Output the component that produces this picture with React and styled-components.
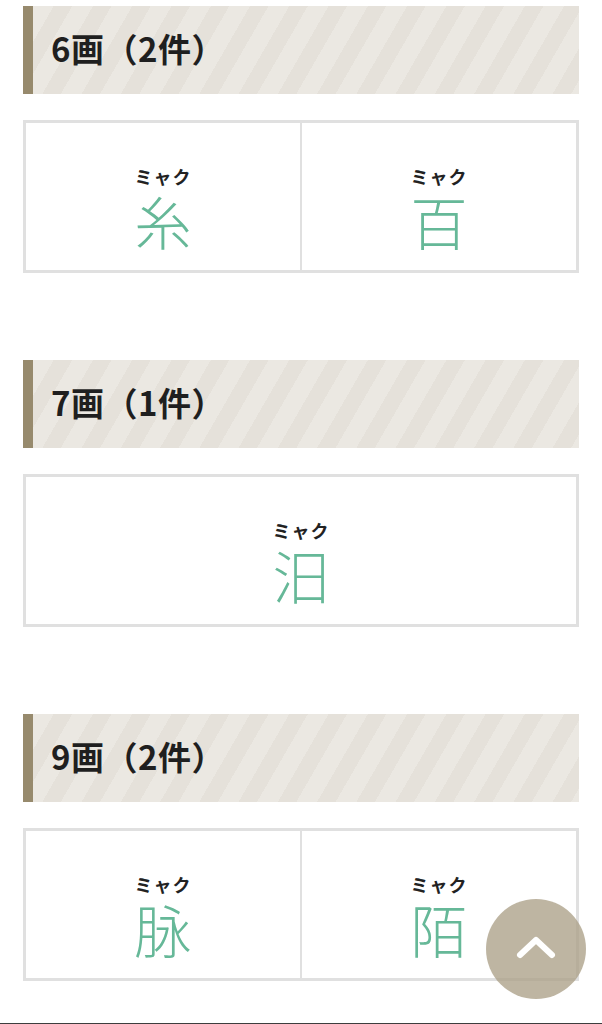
import React from 'react';
import styled, { createGlobalStyle } from 'styled-components';

const GlobalStyle = createGlobalStyle`
    html, body {
        margin: 0;
        padding: 0;
        background: #fff;
        font-family: "Noto Sans CJK JP", "Noto Sans", sans-serif;
        color: #222;
    }
`;

const groups = [
    { strokes: 6, items: [{ kana: 'ミャク', kanji: '糸' }, { kana: 'ミャク', kanji: '百' }] },
    { strokes: 7, items: [{ kana: 'ミャク', kanji: '汨' }] },
    { strokes: 9, items: [{ kana: 'ミャク', kanji: '脉' }, { kana: 'ミャク', kanji: '陌' }] },
];

const App = () => {
    return (
        <>
            <GlobalStyle />
            <Page>
                {groups.map((g) => (
                    <Section key={g.strokes}>
                        <Heading>{g.strokes}画（{g.items.length}件）</Heading>
                        <Grid $cols={g.items.length}>
                            {g.items.map((item, i) => (
                                <Cell key={i}>
                                    <Kana>{item.kana}</Kana>
                                    <Kanji href="#">{item.kanji}</Kanji>
                                </Cell>
                            ))}
                        </Grid>
                    </Section>
                ))}
            </Page>
            <Footer />
            <TopButton aria-label="ページトップへ">
                <svg width="40" height="24" viewBox="0 0 40 24" fill="none">
                    <path d="M4 20 L20 5 L36 20" stroke="#fff" strokeWidth="6" strokeLinecap="round" strokeLinejoin="round" />
                </svg>
            </TopButton>
        </>
    );
};

export default App;

// Styled components
const Page = styled.main`
    padding: 6px 23px 0;
    display: flex;
    flex-direction: column;
    gap: 87px;
`;

const Section = styled.section`
    display: flex;
    flex-direction: column;
    gap: 26px;
`;

const Heading = styled.h2`
    margin: 0;
    height: 88px;
    display: flex;
    align-items: center;
    padding: 0 0 4px 18px;
    box-sizing: border-box;
    border-left: 10px solid #978a6d;
    background: repeating-linear-gradient(
        120deg,
        #ebe8e2 0 18px,
        #e5e1da 18px 34px
    );
    font-size: 33px;
    font-weight: 700;
    color: #1f1f1f;
    letter-spacing: 0.5px;
`;

const Grid = styled.div`
    display: grid;
    grid-template-columns: repeat(${(p) => p.$cols}, 1fr);
    border: 3px solid #e0e0e0;
    gap: 2px;
    background: #e0e0e0;
`;

const Cell = styled.div`
    background: #fff;
    height: 147px;
    display: flex;
    flex-direction: column;
    align-items: center;
    justify-content: center;
    gap: 2px;
    padding-top: 24px;
    box-sizing: border-box;
`;

const Kana = styled.span`
    font-size: 18px;
    font-weight: 700;
    line-height: 20px;
    color: #222;
    letter-spacing: 1px;
`;

const Kanji = styled.a`
    font-size: 57px;
    line-height: 64px;
    font-weight: 300;
    color: #66b898;
    text-decoration: none;
`;

const Footer = styled.footer`
    margin-top: 42px;
    height: 3px;
    background: #3d3d3d;
`;

const TopButton = styled.button`
    position: fixed;
    left: 486px;
    top: 899px;
    width: 100px;
    height: 100px;
    border-radius: 50%;
    border: none;
    padding: 0 0 4px;
    background: rgba(172, 160, 136, 0.78);
    display: flex;
    align-items: center;
    justify-content: center;
    cursor: pointer;
`;
